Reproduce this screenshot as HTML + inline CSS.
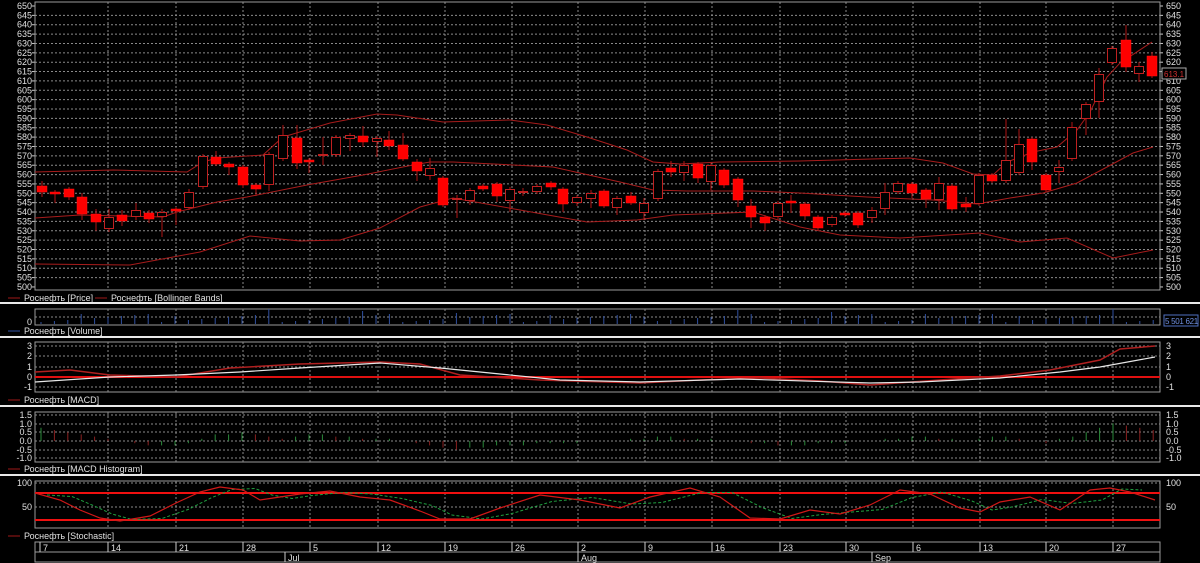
<!DOCTYPE html>
<html><head><meta charset="utf-8"><style>
html,body{margin:0;padding:0;background:#000;width:1200px;height:563px;overflow:hidden}
svg{display:block}
text{font-family:"Liberation Sans",sans-serif;font-size:9px;fill:#e0e0e0}
</style></head><body>
<svg id="s" width="1200" height="563" xmlns="http://www.w3.org/2000/svg"></svg>
<script>
const S=document.getElementById('s');let h='';
const L=35,R=1160;
function ln(x1,y1,x2,y2,c,w,d){h+=`<line x1="${x1}" y1="${y1}" x2="${x2}" y2="${y2}" stroke="${c}" stroke-width="${w||1}"${d?` stroke-dasharray="${d}"`:''}/>`}
function tx(x,y,t,a,c,st){h+=`<text x="${x}" y="${y}"${a?` text-anchor="${a}"`:''} style="${c?`fill:${c};`:''}${st||''}">${t}</text>`}
function pl(pts,c,w,d){h+=`<polyline fill="none" stroke="${c}" stroke-width="${w||1}"${d?` stroke-dasharray="${d}"`:''} points="${pts.map(p=>p.join(',')).join(' ')}"/>`}
const weeks=[36,108,176,243,310,378,445,512,578,645,712,780,846,913,980,1046,1113];
const wl=['7','14','21','28','5','12','19','26','2','9','16','23','30','6','13','20','27'];
function vgrid(y1,y2){weeks.slice(1).forEach(x=>ln(x,y1,x,y2,'#8a8a8a',1,'2,2'))}
function box(y1,y2){h+=`<rect x="${L}" y="${y1}" width="${R-L}" height="${y2-y1}" fill="none" stroke="#9a9a9a"/>`}
const py=v=>6+(650-v)*1.873;
for(let v=500;v<=650;v+=5){const y=py(v);if(v>500&&v<650)ln(L,y,R,y,'#8a8a8a',1,'2,2');tx(32,y+3,v,'end');tx(1166,y+3,v);ln(R,y,R+3,y,'#ccc');ln(L-3,y,L,y,'#ccc')}
vgrid(2,290);box(2,290);
pl([[35,172],[113,170],[187,172],[203,162],[217,158],[263,155],[283,137],[330,123],[377,114],[397,115],[443,122],[510,120],[547,125],[587,137],[627,150],[653,162],[680,164],[720,162],[800,161],[910,158],[943,163],[973,174],[993,175],[1007,162],[1033,152],[1057,147],[1077,130],[1090,112],[1107,77],[1120,63],[1152,42]],'#a81c1c');
pl([[35,218],[80,215],[163,217],[177,212],[217,202],[247,197],[307,185],[363,175],[413,165],[430,162],[453,162],[553,167],[620,182],[653,190],[687,191],[753,191],[800,193],[867,197],[933,200],[977,204],[1010,198],[1043,193],[1077,183],[1107,167],[1133,153],[1153,147]],'#a81c1c');
pl([[35,264],[130,265],[200,252],[250,236],[300,241],[340,240],[380,228],[420,207],[453,198],[520,210],[587,222],[637,220],[673,215],[753,212],[800,227],[840,235],[900,238],[980,233],[1020,242],[1067,238],[1113,258],[1153,250]],'#a81c1c');
const C=[[42,186,192,181,197,1],[55,192,194,190,203,1],[69,189,197,187,200,1],[82,197,214,193,220,1],[96,214,222,209,231,1],[109,217,229,209,232,0],[122,215,221,210,226,1],[136,210,217,203,220,0],[149,213,219,210,223,1],[162,212,217,209,237,0],[176,209,211,207,225,1],[189,192,208,189,210,0],[203,156,187,154,189,0],[216,157,164,151,166,1],[229,164,167,162,175,1],[243,167,185,165,188,1],[256,185,189,183,196,1],[269,154,185,152,191,0],[283,135,159,125,161,0],[297,138,163,125,169,1],[309,160,162,158,173,1],[323,154,156,137,165,0],[336,137,155,135,157,0],[350,135,139,133,151,0],[363,136,142,126,147,1],[377,138,142,136,157,0],[389,140,146,131,150,1],[403,145,159,133,161,1],[417,162,171,159,181,1],[430,168,176,158,180,0],[443,178,205,176,207,1],[457,198,200,195,218,0],[470,190,201,188,205,0],[483,186,189,184,191,1],[497,184,196,182,202,1],[510,189,201,187,212,0],[523,191,193,188,196,0],[537,186,192,184,194,0],[551,183,187,181,190,1],[563,189,204,187,212,1],[577,197,203,195,206,0],[591,193,199,190,208,0],[604,191,206,189,208,1],[617,198,208,196,215,0],[631,196,203,192,205,1],[644,203,213,198,220,0],[658,171,199,169,201,0],[671,168,172,161,177,1],[684,165,173,161,181,0],[698,164,178,162,183,1],[711,165,182,162,190,0],[724,170,185,168,188,1],[738,179,200,177,207,1],[751,206,217,199,228,1],[765,217,223,215,231,1],[778,203,217,201,220,0],[791,201,203,195,213,1],[805,204,216,202,220,1],[818,217,228,215,230,1],[832,217,225,215,227,0],[845,213,214,211,217,1],[858,213,225,211,228,1],[872,210,218,207,223,0],[885,192,209,183,215,0],[898,183,192,181,194,0],[912,184,193,182,198,1],[926,190,199,188,208,1],[939,183,200,177,210,0],[952,186,209,184,211,1],[966,204,207,197,212,1],[979,175,204,173,206,0],[992,175,181,173,183,1],[1006,160,181,119,183,0],[1019,144,173,129,175,0],[1032,139,162,137,170,1],[1046,175,190,173,192,1],[1059,167,172,160,183,0],[1072,127,159,122,161,0],[1086,104,119,102,135,0],[1099,74,102,68,118,0],[1112,48,63,46,65,0],[1126,40,67,25,72,1],[1139,66,74,62,82,0],[1152,56,76,52,78,1]];
C.forEach(c=>{const[x,bt,bb,wt,wb,f]=c;ln(x,wt,x,wb,'#b01414');
h+=f?`<rect x="${x-5}" y="${bt}" width="10" height="${Math.max(2,bb-bt)}" fill="#ff0000" stroke="#ff1010" stroke-width="0.5"/>`:`<rect x="${x-4.5}" y="${bt+.5}" width="9" height="${Math.max(1,bb-bt-1)}" fill="#000" stroke="#c02020"/>`});
h+=`<rect x="1162" y="68" width="24" height="11" fill="#000" stroke="#aaa"/>`;tx(1164,77,'613.1',null,'#d03030','font-size:8px');
function leg(y,t,c,x){ln((x||8),y,(x||8)+12,y,c,1);tx((x||8)+16,y+3,t)}
leg(298,'Роснефть [Price]','#a01818');leg(298,'Роснефть [Bollinger Bands]','#a01818',95);
ln(0,303,1200,303,'#e8e8e8',2);
box(309,325);vgrid(309,325);ln(L,317,R,317,'#8a8a8a',1,'2,2');tx(32,325,'0','end');
for(let i=0;i<84;i++){const x=41+i*13.4;const hh=2+((i*37)%9)+(i%7==3?5:0);ln(x,324,x,324-hh,'#3050a0')}
h+=`<rect x="1164" y="315" width="34" height="11" fill="#000" stroke="#5070c0"/>`;tx(1165,324,'5 501 621',null,'#7090e0','font-size:8px;letter-spacing:-0.3px');
leg(331,'Роснефть [Volume]','#3050a0');
ln(0,337,1200,337,'#e8e8e8',2);
box(342,392);vgrid(342,392);
[[3,346],[2,356],[1,367],[0,377],[-1,387]].forEach(([v,y])=>{tx(32,y+3,v,'end');tx(1166,y+3,v);if(v!=0)ln(L,y,R,y,'#8a8a8a',1,'2,2')});
ln(L,377,R,377,'#e01010',2);
pl([[35,372],[70,370],[110,375],[176,377],[230,368],[300,364],[380,362],[420,364],[460,375],[540,380],[640,383],[700,380],[760,378],[820,381],[870,385],[940,380],[1000,376],[1050,370],[1100,360],[1120,349],[1155,346]],'#b02020',1.5);
pl([[35,382],[110,377],[176,375],[240,372],[300,368],[380,363],[440,368],[500,374],[560,380],[640,382],[740,379],[870,383],[920,382],[1000,378],[1060,372],[1100,367],[1155,357]],'#e8e8e8',1.2);
leg(400,'Роснефть [MACD]','#a01818');
ln(0,406,1200,406,'#e8e8e8',2);
box(412,462);vgrid(412,462);
[['1.5',415],['1.0',424],['0.5',432],['0.0',441],['-0.5',450],['-1.0',458]].forEach(([v,y])=>{tx(32,y+3,v,'end');tx(1166,y+3,v);ln(L,y,R,y,'#8a8a8a',1,'2,2')});
const hv=[6,5,4,3,2,1,0,-1,-2,-2,-2,-1,1,3,3,4,3,2,1,2,3,3,2,2,1,1,1,0,-1,-2,-3,-4,-3,-3,-2,-2,-2,-1,-1,-1,-1,0,0,0,1,1,2,2,1,1,1,0,0,-1,-1,-2,-2,-2,-1,-1,-1,0,0,1,1,2,2,1,1,0,1,2,2,1,0,-1,1,2,4,6,8,7,6,5];
hv.forEach((v,i)=>{const x=41+i*13.4;const prev=i?hv[i-1]:v;ln(x,441,x,441-v*2.2,v>=prev?'#2a8a3a':'#8a2020')});
leg(469,'Роснефть [MACD Histogram]','#a01818');
ln(0,475,1200,475,'#e8e8e8',2);
box(481,528);vgrid(481,528);
[[100,483],[50,507]].forEach(([v,y])=>{tx(32,y+3,v,'end');tx(1166,y+3,v);ln(L,y,R,y,'#8a8a8a',1,'2,2')});
ln(L,493,R,493,'#f01010',2);ln(L,520,R,520,'#f01010',2);
const K=[[35,493],[60,500],[80,510],[100,518],[120,521],[150,516],[176,503],[200,492],[220,487],[243,490],[260,500],[280,497],[300,494],[330,491],[360,497],[390,500],[420,511],[440,519],[470,519],[500,508],[540,495],[580,500],[620,508],[650,497],[690,488],[720,497],[750,518],[780,519],[810,510],[840,514],[870,505],[900,490],[930,494],[960,508],[980,512],[1000,502],[1030,497],[1060,510],[1090,490],[1110,488],[1130,492],[1155,500]];
pl(K.map(([x,y],i)=>[x,i?(K[i-1][1]*0.5+y*0.5):y+2]).map(([x,y])=>[x+12,y]).filter(p=>p[0]<=1158),'#20a040',1,'3,2');
pl(K,'#d01818',1.2);
leg(536,'Роснефть [Stochastic]','#a01818');
h+=`<rect x="${L}" y="542" width="${R-L}" height="20" fill="#000" stroke="#9a9a9a"/>`;ln(L,552,R,552,'#9a9a9a');
ln(40,542,40,552,'#ccc');
weeks.forEach((x,i)=>{if(i)ln(x,542,x,552,'#ccc');tx(x+(i?3:7),551,wl[i])});
[[285,'Jul'],[578,'Aug'],[872,'Sep']].forEach(([x,t])=>{ln(x,552,x,562,'#ccc');tx(x+3,561,t)});
S.innerHTML=h;
</script>
</body></html>
